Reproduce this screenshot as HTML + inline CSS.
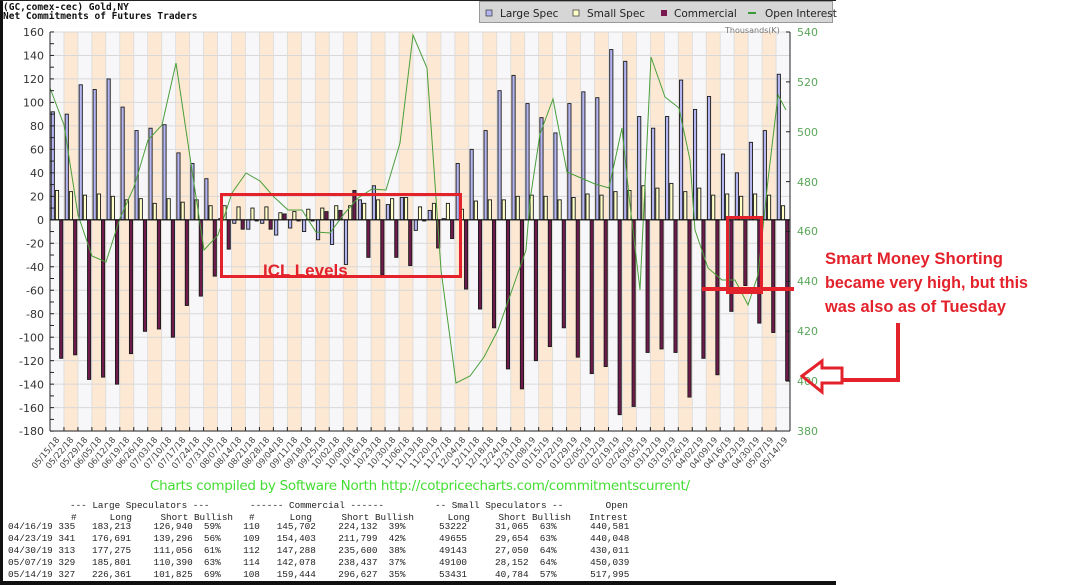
<!DOCTYPE html>
<html><head><meta charset="utf-8"><style>
html,body{margin:0;padding:0;background:#fff;width:1066px;height:585px;overflow:hidden}
svg{display:block}
.ax{font-family:"DejaVu Sans","Liberation Sans",sans-serif;font-size:11px;fill:#333}
.rx{font-family:"DejaVu Sans","Liberation Sans",sans-serif;font-size:11px;fill:#5aa65a}
.dl{font-family:"DejaVu Sans","Liberation Sans",sans-serif;font-size:8.5px;fill:#444}
.tb{font-family:"Liberation Mono",monospace;font-size:9.3px;fill:#222}
.lg{font-family:"DejaVu Sans","Liberation Sans",sans-serif;font-size:10.5px;fill:#222}
.ann{font-family:"Liberation Sans",sans-serif;font-weight:bold;font-size:17px;fill:#e3222b}
</style></head><body>
<svg id="s" width="1066" height="585" xmlns="http://www.w3.org/2000/svg">
<rect x="0" y="0" width="836" height="585" fill="#fff"/>
<g id="bg"></g>
<g id="bars"></g>
<polyline fill="none" stroke="#4a9e3a" stroke-width="1" points="50,88 64,125 78,215 92,256 106,262 120,218 134,187 148,140 162,125 176,63 190,157 204,250 218,235 232,193 246,173 260,181 274,197 288,210 302,210 316,232 330,233 344,214 358,198 372,189 386,190 400,143 413,35 427,68 441,270 456,383 470,376 484,357 498,330 512,290 526,250 530,200 540,134 553,99 567,172 581,178 595,184 609,188 622,128 630,205 640,290 651,57 665,97 679,108 690,160 695,230 708,268 722,280 735,280 748,305 758,275 768,180 778,95 786,110"/>
<!-- axes -->
<line x1="50" y1="32" x2="50" y2="431" stroke="#222"/>
<line x1="50" y1="431" x2="790" y2="431" stroke="#222"/>
<line x1="790" y1="32" x2="790" y2="431" stroke="#222"/>
<line x1="50" y1="219.8" x2="790" y2="219.8" stroke="#111" stroke-width="1.2"/>
<g id="ticks" stroke="#222"></g>
<!-- left labels -->
<g class="ax" text-anchor="end">
<text x="44" y="36">160</text><text x="44" y="59.5">140</text><text x="44" y="83">120</text><text x="44" y="106.5">100</text><text x="44" y="130">80</text><text x="44" y="153.5">60</text><text x="44" y="177">40</text><text x="44" y="200.5">20</text><text x="44" y="224">0</text><text x="44" y="247.5">-20</text><text x="44" y="271">-40</text><text x="44" y="294.5">-60</text><text x="44" y="318">-80</text><text x="44" y="341.5">-100</text><text x="44" y="365">-120</text><text x="44" y="388.5">-140</text><text x="44" y="412">-160</text><text x="44" y="435">-180</text>
</g>
<g class="rx">
<text x="797" y="36">540</text><text x="797" y="136">500</text><text x="797" y="86">520</text><text x="797" y="186">480</text><text x="797" y="235">460</text><text x="797" y="285">440</text><text x="797" y="335">420</text><text x="797" y="385">400</text><text x="797" y="435">380</text>
</g>
<text x="725" y="33" font-family="DejaVu Sans,sans-serif" font-size="8px" fill="#777">Thousands(K)</text>
<!-- title -->
<text x="3" y="10" font-family="DejaVu Sans Mono,Liberation Mono,monospace" font-weight="bold" font-size="9.5px" fill="#111">(GC,comex-cec) Gold,NY</text>
<text x="3" y="19" font-family="DejaVu Sans Mono,Liberation Mono,monospace" font-weight="bold" font-size="9.5px" fill="#111">Net Commitments of Futures Traders</text>
<!-- legend -->
<rect x="479.5" y="1.5" width="353" height="21" fill="#d6d6d6" stroke="#999"/>
<rect x="486" y="10" width="6" height="6" fill="#b4b4f0" stroke="#333" stroke-width="0.7"/>
<text class="lg" x="500" y="17">Large Spec</text>
<rect x="573" y="10" width="6" height="6" fill="#ffffc8" stroke="#333" stroke-width="0.7"/>
<text class="lg" x="587" y="17">Small Spec</text>
<rect x="661" y="10" width="6" height="6" fill="#7a1850"/>
<text class="lg" x="674" y="17">Commercial</text>
<line x1="748" y1="13" x2="756" y2="13" stroke="#3a9a3a" stroke-width="2"/>
<text class="lg" x="765" y="17">Open Interest</text>
<!-- x labels -->
<g class="dl" text-anchor="end">
<text transform="translate(60,440) rotate(-50)">05/15/18</text>
<text transform="translate(74,440) rotate(-50)">05/22/18</text>
<text transform="translate(88,440) rotate(-50)">05/29/18</text>
<text transform="translate(102,440) rotate(-50)">06/05/18</text>
<text transform="translate(116,440) rotate(-50)">06/12/18</text>
<text transform="translate(130,440) rotate(-50)">06/19/18</text>
<text transform="translate(144,440) rotate(-50)">06/26/18</text>
<text transform="translate(158,440) rotate(-50)">07/03/18</text>
<text transform="translate(172,440) rotate(-50)">07/10/18</text>
<text transform="translate(186,440) rotate(-50)">07/17/18</text>
<text transform="translate(200,440) rotate(-50)">07/24/18</text>
<text transform="translate(214,440) rotate(-50)">07/31/18</text>
<text transform="translate(228,440) rotate(-50)">08/07/18</text>
<text transform="translate(242,440) rotate(-50)">08/14/18</text>
<text transform="translate(256,440) rotate(-50)">08/21/18</text>
<text transform="translate(270,440) rotate(-50)">08/28/18</text>
<text transform="translate(284,440) rotate(-50)">09/04/18</text>
<text transform="translate(298,440) rotate(-50)">09/11/18</text>
<text transform="translate(312,440) rotate(-50)">09/18/18</text>
<text transform="translate(326,440) rotate(-50)">09/25/18</text>
<text transform="translate(340,440) rotate(-50)">10/02/18</text>
<text transform="translate(354,440) rotate(-50)">10/09/18</text>
<text transform="translate(368,440) rotate(-50)">10/16/18</text>
<text transform="translate(382,440) rotate(-50)">10/23/18</text>
<text transform="translate(396,440) rotate(-50)">10/30/18</text>
<text transform="translate(410,440) rotate(-50)">11/06/18</text>
<text transform="translate(424,440) rotate(-50)">11/13/18</text>
<text transform="translate(438,440) rotate(-50)">11/20/18</text>
<text transform="translate(452,440) rotate(-50)">11/27/18</text>
<text transform="translate(466,440) rotate(-50)">12/04/18</text>
<text transform="translate(480,440) rotate(-50)">12/11/18</text>
<text transform="translate(494,440) rotate(-50)">12/18/18</text>
<text transform="translate(508,440) rotate(-50)">12/24/18</text>
<text transform="translate(522,440) rotate(-50)">12/31/18</text>
<text transform="translate(536,440) rotate(-50)">01/08/19</text>
<text transform="translate(550,440) rotate(-50)">01/15/19</text>
<text transform="translate(564,440) rotate(-50)">01/22/19</text>
<text transform="translate(578,440) rotate(-50)">01/29/19</text>
<text transform="translate(592,440) rotate(-50)">02/05/19</text>
<text transform="translate(606,440) rotate(-50)">02/12/19</text>
<text transform="translate(620,440) rotate(-50)">02/19/19</text>
<text transform="translate(634,440) rotate(-50)">02/26/19</text>
<text transform="translate(648,440) rotate(-50)">03/05/19</text>
<text transform="translate(662,440) rotate(-50)">03/12/19</text>
<text transform="translate(676,440) rotate(-50)">03/19/19</text>
<text transform="translate(690,440) rotate(-50)">03/26/19</text>
<text transform="translate(704,440) rotate(-50)">04/02/19</text>
<text transform="translate(718,440) rotate(-50)">04/09/19</text>
<text transform="translate(732,440) rotate(-50)">04/16/19</text>
<text transform="translate(746,440) rotate(-50)">04/23/19</text>
<text transform="translate(760,440) rotate(-50)">04/30/19</text>
<text transform="translate(774,440) rotate(-50)">05/07/19</text>
<text transform="translate(788,440) rotate(-50)">05/14/19</text>
</g>
<!-- footer -->
<text x="150" y="490" font-family="DejaVu Sans,Liberation Sans,sans-serif" font-size="13.5px" fill="#44dd33" textLength="540">Charts compiled by Software North  http://cotpricecharts.com/commitmentscurrent/</text>
<g class="tb">
<text x="70" y="508">--- Large Speculators ---</text>
<text x="250" y="508">------ Commercial ------</text>
<text x="435" y="508">-- Small Speculators --</text>
<text x="628" y="508" text-anchor="end">Open</text>
<text x="71" y="520">#</text>
<text x="132" y="520" text-anchor="end">Long</text>
<text x="233" y="520" text-anchor="end">Short Bullish</text>
<text x="249" y="520">#</text>
<text x="312" y="520" text-anchor="end">Long</text>
<text x="414" y="520" text-anchor="end">Short Bullish</text>
<text x="470" y="520" text-anchor="end">Long</text>
<text x="571" y="520" text-anchor="end">Short Bullish</text>
<text x="628" y="520" text-anchor="end">Intrest</text>
</g>
<g class="tb" id="rows"></g>
<!-- annotations -->
<rect x="221.5" y="194.5" width="239" height="82" fill="none" stroke="#e3222b" stroke-width="3"/>
<text x="263" y="276" class="ann" font-size="16px">ICL Levels</text>
<rect x="727.5" y="217.5" width="34" height="75" fill="none" stroke="#e3222b" stroke-width="3"/>
<line x1="702" y1="289" x2="794" y2="289" stroke="#e3222b" stroke-width="4"/>
<text x="825" y="264" class="ann" textLength="178" lengthAdjust="spacingAndGlyphs">Smart Money Shorting</text>
<text x="825" y="288" class="ann" textLength="203" lengthAdjust="spacingAndGlyphs">became very high, but this</text>
<text x="825" y="312" class="ann" textLength="181" lengthAdjust="spacingAndGlyphs">was also as of Tuesday</text>
<polyline points="898,323 898,380 843,380" fill="none" stroke="#e3222b" stroke-width="4"/>
<polygon points="802,376 822,361 822,368 842,368 842,383 822,383 822,392" fill="none" stroke="#e3222b" stroke-width="3"/>
<!-- borders -->
<rect x="0" y="0" width="3" height="585" fill="#111"/>
<rect x="0" y="581" width="836" height="4" fill="#111"/>
<rect x="0" y="0" width="836" height="1" fill="#222"/>
</svg>
<script>
(function(){
var NS="http://www.w3.org/2000/svg";
function el(p,t,a){var e=document.createElementNS(NS,t);for(var k in a)e.setAttribute(k,a[k]);p.appendChild(e);return e;}
var bg=document.getElementById("bg"),bars=document.getElementById("bars"),ticks=document.getElementById("ticks");
var W=13.962,X0=50,Y0=219.8,S=1.174;
for(var k=0;k<53;k++){var x=X0+k*W;el(bg,"rect",{x:x,y:32,width:W,height:399,fill:(k%2?"#fde9d3":"#f7f7f9")});}
for(var v=-180;v<=160;v+=20){var y=Y0-v*S;el(bg,"line",{x1:50,x2:790,y1:y,y2:y,stroke:"#d8d8d8","stroke-width":1});}
for(var k=1;k<53;k++){var x=X0+k*W;el(bg,"line",{x1:x,x2:x,y1:32,y2:431,stroke:"#dadada","stroke-width":0.8});}
for(var v=-180;v<=160;v+=10){var y=Y0-v*S;el(ticks,"line",{x1:50,x2:54,y1:y,y2:y});}
for(var k=0;k<=53;k++){var x=X0+k*W;el(ticks,"line",{x1:x,x2:x,y1:427,y2:431});}
for(var i=0;i<=8;i++){var y=32+i*49.875;el(ticks,"line",{x1:786,x2:790,y1:y,y2:y});}
var L=[92,90,115,111,120,96,76,78,81,57,48,35,1,-3,-8,-3,-13,-7,-10,-17,-21,-38,17,29,13,19,-9,8,1,48,60,76,110,123,99,87,74,99,109,104,145,135,88,78,88,119,94,105,56,40,66,76,124];
var Sm=[25,24,21,22,20,17,18,14,18,15,17,12,12,11,10,11,6,7,9,10,12,12,14,17,18,19,11,14,14,9,16,17,17,20,21,20,17,19,22,21,24,25,29,27,31,24,27,21,22,20,22,21,12];
var C=[-118,-115,-136,-134,-140,-114,-95,-93,-100,-73,-65,-48,-25,-8,-1,-8,5,-1,-1,7,8,25,-32,-47,-32,-39,-1,-24,-16,-59,-76,-92,-127,-144,-120,-108,-92,-117,-131,-125,-166,-159,-113,-110,-113,-151,-118,-132,-78,-56,-88,-96,-137];
function bar(x,v,f){var y=Y0-v*S;var t=Math.min(y,Y0),h=Math.abs(y-Y0);if(h<0.5)h=0.8;el(bars,"rect",{x:x,y:t,width:3.2,height:h,fill:f,stroke:"#1a1a1a","stroke-width":0.9});}
for(var k=0;k<53;k++){var x=X0+k*W;bar(x+1.2,L[k],"#b4b4f0");bar(x+5.4,Sm[k],"#ffffc8");bar(x+9.6,C[k],"#6e1a4c");}
var rows=[["04/16/19","335","183,213","126,940","59%","110","145,702","224,132","39%","53222","31,065","63%","440,581"],
["04/23/19","341","176,691","139,296","56%","109","154,403","211,799","42%","49655","29,654","63%","440,048"],
["04/30/19","313","177,275","111,056","61%","112","147,288","235,600","38%","49143","27,050","64%","430,011"],
["05/07/19","329","185,801","110,390","63%","114","142,078","238,437","37%","49100","28,152","64%","450,039"],
["05/14/19","327","226,361","101,825","69%","108","159,444","296,627","35%","53431","40,784","57%","517,995"]];
})();
</script>
<svg width="0" height="0" style="position:absolute"></svg>
<div style="position:absolute;left:0;top:0;width:1066px;height:585px;pointer-events:none">
<div style="position:absolute;left:8px;top:521px;font-family:'Liberation Mono',monospace;font-size:9.33px;line-height:12px;color:#222;white-space:pre">04/16/19 335   183,213    126,940  59%    110   145,702    224,132  39%      53222     31,065  63%      440,581
04/23/19 341   176,691    139,296  56%    109   154,403    211,799  42%      49655     29,654  63%      440,048
04/30/19 313   177,275    111,056  61%    112   147,288    235,600  38%      49143     27,050  64%      430,011
05/07/19 329   185,801    110,390  63%    114   142,078    238,437  37%      49100     28,152  64%      450,039
05/14/19 327   226,361    101,825  69%    108   159,444    296,627  35%      53431     40,784  57%      517,995</div>
</div>
</body></html>
